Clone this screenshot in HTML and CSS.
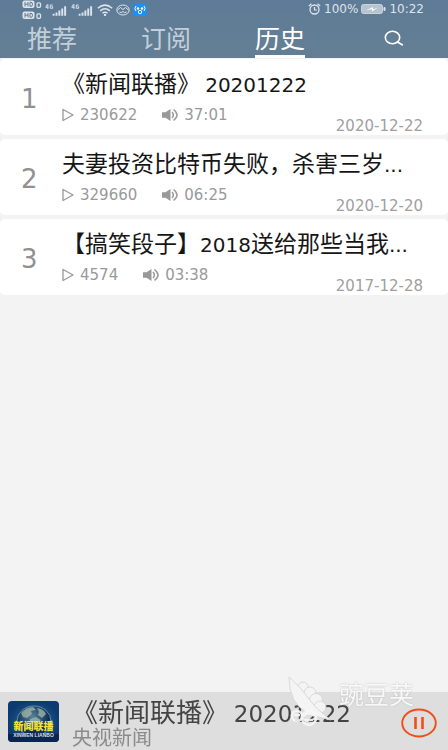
FILE: index.html
```html
<!DOCTYPE html>
<html lang="zh-CN">
<head>
<meta charset="utf-8">
<meta name="viewport" content="width=device-width, initial-scale=1">
<title>历史</title>
<link rel="stylesheet" href="styles.css">
</head>
<body>
<svg class="defs" aria-hidden="true">
  <symbol id="play" viewBox="0 0 12 14"><path d="M1 1.5 11 7 1 12.5Z" fill="none" stroke="currentColor" stroke-width="1.3" stroke-linejoin="round"/></symbol>
  <symbol id="speaker" viewBox="0 0 16 14"><path d="M0 4.200h3.500L8.500 1v12L3.500 9.800H0Z" fill="currentColor"/><path d="M10 4q2.800 3 0 6M11.500 1.500q7 5.500 0 11" fill="none" stroke="currentColor" stroke-width="1.500"/></symbol>
  <symbol id="signal" viewBox="0 0 24 14"><path d="M2.500 1 .8 4.200h2.700M3 1v5M8 1.800H5.500v3.400H8V3.500H6.800" fill="none" stroke="currentColor" stroke-width="1"/><path d="M8 11h2v2H8zM11 9.500h2V13h-2zM14 7.500h2V13h-2zM17 5.500h2V13h-2zM20 3h2v10h-2z" fill="currentColor"/></symbol>
  <symbol id="hd" viewBox="0 0 20 9"><rect x=".5" y=".5" width="12" height="7.500" rx="2" fill="currentColor"/><path d="M3 2v4.500M6 2v4.500M3 4.200h3M8 2.300v4h1q1.500 0 1.500-2t-1.500-2Z" fill="none" stroke="#607c94" stroke-width="1"/><rect x="15" y="2.800" width="3.500" height="4.500" rx="1" fill="none" stroke="currentColor" stroke-width="1.300"/></symbol>
</svg>
<header class="header">
  <div class="status">
    <div class="status-left">
      <div class="hd-stack"><svg class="hd"><use href="#hd"/></svg><svg class="hd"><use href="#hd"/></svg></div>
      <svg class="signal"><use href="#signal"/></svg>
      <svg class="signal"><use href="#signal"/></svg>
      <svg class="wifi" viewBox="0 0 16 12"><path d="M.8 4.300Q8-2 15.200 4.300M3.200 6.800q4.800-4 9.600 0M5.500 9.200q2.500-2 5 0" fill="none" stroke="currentColor" stroke-width="1.500"/><circle cx="8" cy="11" r="1.200" fill="currentColor"/></svg>
      <svg class="face" viewBox="0 0 14 12"><ellipse cx="7" cy="6" rx="6.200" ry="5" fill="none" stroke="currentColor" stroke-width="1"/><path d="M1.500 6 4.500 3.500 7 5.500l2.500-2 3 2.500M3.500 8q2 1.500 3.500-.5Q8.500 9.500 10.500 8" fill="none" stroke="currentColor" stroke-width="1"/></svg>
      <svg class="app" viewBox="0 0 14 12"><rect width="14" height="12" rx="2.500" fill="#1d90f0"/><path d="M3 2Q.8 4.500 3 7M11 2q2.200 2.500 0 5" fill="none" stroke="#fff"/><circle cx="5" cy="4.500" r="1.200" fill="#fff"/><circle cx="9" cy="4.500" r="1.200" fill="#fff"/><circle cx="7" cy="8" r="1.700" fill="none" stroke="#fff"/></svg>
    </div>
    <div class="status-right">
      <svg class="alarm" viewBox="0 0 13 12"><circle cx="6.500" cy="6.500" r="4.500" fill="none" stroke="currentColor" stroke-width="1.300"/><path d="M6.500 4v3H9M.8 3 3.500.8M12.200 3 9.500.8" fill="none" stroke="currentColor" stroke-width="1.200"/></svg>
      <span>100%</span>
      <svg class="battery" viewBox="0 0 25 10"><rect x=".5" y=".5" width="21" height="9" rx="2" fill="#b7c4cf" stroke="#c9d3db"/><path d="M5 6.500 12 3v2.500L17 3.500 11 7.500V5Z" fill="#fff"/><rect x="22.500" y="3" width="2" height="4" rx="1" fill="#dde4ea"/></svg>
      <time>10:22</time>
    </div>
  </div>
  <nav class="tabs">
    <a class="tab" href="#recommend">推荐</a>
    <a class="tab" href="#subscribe">订阅</a>
    <a class="tab active" href="#history" aria-current="page">历史</a>
    <button class="search" type="button" aria-label="搜索"><svg viewBox="0 0 20 16"><ellipse cx="8.500" cy="7.500" rx="7.200" ry="6.200" fill="none" stroke="currentColor" stroke-width="1.600"/><path d="m13.500 12 4.700 2.800" stroke="currentColor" stroke-width="1.800" stroke-linecap="round"/></svg></button>
  </nav>
</header>
<main class="list">
  <article class="card">
    <span class="rank">1</span>
    <div class="info">
      <h2 class="title">《新闻联播》 <span class="latin">20201222</span></h2>
      <p class="meta"><svg class="play"><use href="#play"/></svg><span>230622</span><svg class="speaker"><use href="#speaker"/></svg><span>37:01</span></p>
    </div>
    <time class="date">2020-12-22</time>
  </article>
  <article class="card">
    <span class="rank">2</span>
    <div class="info">
      <h2 class="title">夫妻投资比特币失败，杀害三岁<span class="latin">...</span></h2>
      <p class="meta"><svg class="play"><use href="#play"/></svg><span>329660</span><svg class="speaker"><use href="#speaker"/></svg><span>06:25</span></p>
    </div>
    <time class="date">2020-12-20</time>
  </article>
  <article class="card">
    <span class="rank">3</span>
    <div class="info">
      <h2 class="title">【搞笑段子】<span class="latin">2018</span>送给那些当我<span class="latin">...</span></h2>
      <p class="meta"><svg class="play"><use href="#play"/></svg><span>4574</span><svg class="speaker"><use href="#speaker"/></svg><span>03:38</span></p>
    </div>
    <time class="date">2017-12-28</time>
  </article>
</main>
<footer class="player">
  <div class="cover">
    <svg class="globe" viewBox="0 0 51 41" aria-hidden="true">
      <defs><radialGradient id="space"><stop offset="0" stop-color="#2c6d9c"/><stop offset="1" stop-color="#0d3b70"/></radialGradient><radialGradient id="earth" cx=".45" cy=".35"><stop offset="0" stop-color="#55849b"/><stop offset="1" stop-color="#0d2e52"/></radialGradient></defs>
      <rect width="51" height="41" fill="url(#space)"/>
      <ellipse cx="26" cy="20" rx="17" ry="15" fill="url(#earth)" stroke="#6f9fbd" stroke-width=".8"/>
      <path d="M13 12q5-6 12-6l3 3-5 1 1 3-5 4-4-1ZM29 7q7 1 9 6l-4 4-4-3 1-3ZM22 18l6-2 5 3-3 3-8-1Z" fill="#a6b9aa" opacity=".75"/>
      <path d="M0 33h51v8H0z" fill="#09264f"/>
    </svg>
    <div class="cover-text"><b>新闻联播</b><small>XINWEN LIANBO</small></div>
  </div>
  <div class="now">
    <h2 class="now-title">《新闻联播》 <span class="now-latin">20201222</span></h2>
    <p class="now-source">央视新闻</p>
  </div>
  <button class="pause" type="button" aria-label="暂停"><svg viewBox="0 0 36 30"><ellipse cx="18" cy="15" rx="16.800" ry="13.500" fill="none" stroke="#f04e16" stroke-width="1.900"/><path d="M14.500 9v12M21.500 9v12" stroke="#f04e16" stroke-width="2.600"/></svg></button>
  <div class="watermark">
    <svg class="pod" viewBox="0 0 46 52" aria-hidden="true"><g fill="#f4f4f4" stroke="#d2d2d2" stroke-width=".8"><circle cx="15" cy="11" r="5"/><circle cx="22" cy="17" r="6"/><circle cx="28" cy="24" r="6.500"/><circle cx="32" cy="31" r="6"/><path d="M1 1Q1 28 20 37q11 5 23 7Q28 33 21 23 13 11 1 1Z"/></g><g fill="none" stroke="#f7f7f7" stroke-width="2.600" opacity=".9"><circle cx="9" cy="40" r="5"/><circle cx="21" cy="42" r="7"/><path d="M15 40q6-6 12 0M6 39h6M16 44h9"/></g></svg>
    <span>豌豆荚</span>
  </div>
</footer>
</body>
</html>
```
FILE: styles.css
```css
* {
  box-sizing: border-box;
}

body {
  margin: 0;
  min-height: 100vh;
  display: flex;
  flex-direction: column;
  background: #f3f3f3;
  font-family: "DejaVu Sans", "Noto Sans CJK SC", sans-serif;
}

h2,
p {
  margin: 0;
  font-weight: 400;
}

svg {
  display: block;
  flex: none;
}

.defs {
  position: absolute;
  width: 0;
  height: 0;
}

.header {
  background: linear-gradient(#5e7b97, #647f94);
  color: #fff;
}

.status {
  height: 20px;
  padding: 0 24px 0 22px;
  display: flex;
  justify-content: space-between;
  color: #dde4ea;
  font-size: 12px;
  line-height: 18px;
}

.status-left,
.status-right {
  display: flex;
  align-items: center;
}

.status-left {
  gap: 3px;
}

.status-right {
  height: 18px;
  gap: 3px;
}

.hd-stack {
  display: grid;
  gap: 2px;
}

.hd {
  width: 20px;
  height: 9px;
}

.signal {
  width: 23px;
  height: 14px;
}

.wifi {
  width: 16px;
  height: 12px;
}

.face,
.app {
  width: 14px;
  height: 12px;
}

.alarm {
  width: 13px;
  height: 12px;
}

.battery {
  width: 25px;
  height: 10px;
}

.tabs {
  display: grid;
  grid-template-columns: repeat(4, 1fr);
  justify-items: center;
  margin: 0 -3px 0 -5px;
}

.tab {
  height: 38px;
  line-height: 34px;
  font-family: "Noto Sans CJK SC", sans-serif;
  font-size: 25px;
  color: #c3cfd9;
  text-decoration: none;
}

.tab.active {
  color: #fff;
  border-bottom: 3px solid #fff;
}

button {
  padding: 0;
  border: 0;
  background: none;
  color: inherit;
}

.search {
  height: 36px;
}

.search svg {
  width: 20px;
  height: 16px;
}

.list {
  flex: 1;
  display: flex;
  flex-direction: column;
  gap: 4px;
  padding-top: 1px;
}

.card {
  display: grid;
  grid-template-columns: 62px 1fr auto;
  min-height: 76px;
  padding-right: 25px;
  background: #fff;
  border-radius: 5px;
}

.rank {
  padding: 4px 0 0 21px;
  align-self: center;
  font-size: 26px;
  line-height: 30px;
  color: #919191;
}

.info {
  grid-column: 2 / 4;
  grid-row: 1;
  padding-top: 6px;
}

.title {
  font-family: "Noto Sans CJK SC", sans-serif;
  font-size: 23px;
  line-height: 34px;
  white-space: nowrap;
  color: #161616;
}

.latin {
  font-family: "DejaVu Sans", sans-serif;
  font-size: 20px;
}

.meta {
  display: flex;
  align-items: center;
  font-size: 15px;
  line-height: 26px;
  color: #999;
}

.play {
  width: 12px;
  height: 14px;
  margin-right: 6px;
}

.speaker {
  width: 16px;
  height: 14px;
  margin-left: 25px;
  margin-right: 6px;
}

.date {
  grid-column: 3;
  grid-row: 1;
  align-self: end;
  font-size: 15px;
  line-height: 18px;
  color: #a0a0a0;
}

.player {
  position: sticky;
  bottom: 0;
  height: 58px;
  padding: 0 11px 0 8px;
  display: flex;
  align-items: center;
  background: #dedede;
}

.cover {
  flex: none;
  display: grid;
  width: 51px;
  height: 41px;
  margin-right: 13px;
  border-radius: 4px;
  overflow: hidden;
}

.globe,
.cover-text {
  grid-area: 1 / 1;
}

.globe {
  width: 51px;
  height: 41px;
}

.cover-text {
  align-self: end;
  padding-bottom: 4px;
  text-align: center;
  white-space: nowrap;
}

.cover-text b {
  display: block;
  font: 900 10px/12px "Noto Sans CJK SC", sans-serif;
  color: #f4e534;
}

.cover-text small {
  display: block;
  font: 700 5px/6px "Liberation Sans", sans-serif;
  color: #d5dfeb;
}

.now {
  flex: 1;
  white-space: nowrap;
}

.now-title {
  font-family: "Noto Sans CJK SC", sans-serif;
  font-size: 26px;
  line-height: 28px;
  color: #444;
}

.now-latin {
  font-family: "DejaVu Sans", sans-serif;
  font-size: 23px;
}

.now-source {
  font-family: "Noto Sans CJK SC", sans-serif;
  font-size: 20px;
  line-height: 18px;
  color: #8b8b8b;
}

.pause {
  padding-top: 3px;
}

.pause svg {
  width: 36px;
  height: 30px;
}

.watermark {
  position: absolute;
  right: 34px;
  bottom: 22px;
  display: flex;
  gap: 5px;
  pointer-events: none;
  font: 25px/34px "Noto Sans CJK SC", sans-serif;
  color: #f8f8f8;
  text-shadow: 0 0 2px #bbb;
}

.pod {
  width: 46px;
  height: 52px;
}
```
